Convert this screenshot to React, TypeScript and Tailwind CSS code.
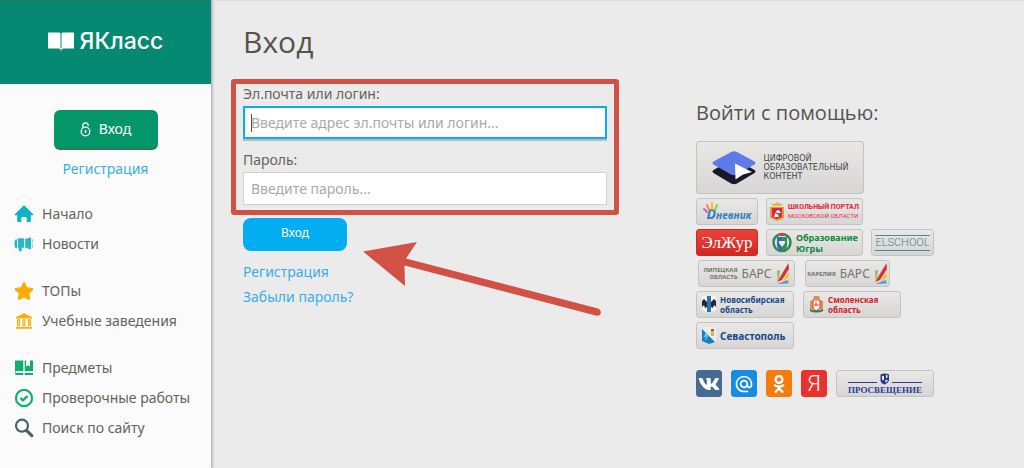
import { ReactNode } from "react";
import { FaOdnoklassniki, FaStar, FaVk } from "react-icons/fa";
import { MdAlternateEmail } from "react-icons/md";

const HomeIcon = () => (
  <svg width="20" height="20" viewBox="0 0 20 20" fill="#0db4c4">
    <path d="M9.3 1.8a1 1 0 0 1 1.4 0l8.3 8.1c.6.6.3 1.3-.5 1.3h-1.7v6.1c0 .5-.3.8-.8.8h-3.3v-4.3c0-.5-.3-.8-.8-.8H8.1c-.5 0-.8.3-.8.8v4.3H4c-.5 0-.8-.3-.8-.8v-6.1H1.5c-.8 0-1.1-.7-.5-1.3z" />
  </svg>
);

const NewsIcon = () => (
  <svg width="20" height="20" viewBox="0 0 20 20" fill="#2bb8c4">
    <path d="M1.8 5.2h1.3v9H1.8C0 13 0 6.500 1.800 5.200zM4 4.300h6.200v9.400H7.700v3.600H5.300l-1-3.600H4zM11.200 5l5.900-1.700v12.200l-5.900-1.800zM18 5c1 .5 1 2 .3 2.600v4c.7.600.7 1.700-.3 2.200z" />
  </svg>
);

const SchoolIcon = () => (
  <svg width="20" height="20" viewBox="0 0 20 20" fill="#fcae0c">
    <path d="M10 2.300 18 6v1.400H2V6zM3 8.300h3v7H3zM8.400 8.300h3v7h-3zM14 8.300h3v7h-3zM2 16h16v1.800H2z" />
    <path d="M4.200 9.200h.6v5h-.6zM9.600 9.200h.6v5h-.6zM15.200 9.200h.6v5h-.6z" fill="#fff3d6" />
  </svg>
);

const SubjectsIcon = () => (
  <svg width="20" height="20" viewBox="0 0 20 20" fill="#0fae6c">
    <path d="M2 2.500h6.500c.6 0 1 .4 1 1v9.700H3c-1 0-1.500.5-1.500 1 0 .4.200.7.600.7h7.400v2H2.700c-1 0-1.700-.7-1.700-1.700V3.500c0-.6.400-1 1-1zM10.500 2.500h1.600v6.200l1.900-1.500 1.900 1.500V2.500h2.100c.6 0 1 .4 1 1v9.700h-8.500zM10.500 14.900H19v2h-8.500z" />
    <path d="M1.500 13.800h17M10 2v15.500" stroke="#fbfbfb" strokeWidth=".8" />
  </svg>
);

const TestsIcon = () => (
  <svg width="20" height="20" viewBox="0 0 20 20" fill="none" stroke="#0fae73">
    <circle cx="10" cy="10" r="8.100" strokeWidth="2.200" />
    <path d="m6.500 10 2.400 2.400 4.600-4.300" strokeWidth="2.400" />
  </svg>
);

const SearchIcon = () => (
  <svg width="20" height="20" viewBox="0 0 20 20" fill="none" stroke="#475f70">
    <circle cx="8" cy="7.700" r="6" strokeWidth="2.200" />
    <path d="m12.400 12.400 5.400 5.200" strokeWidth="3.200" strokeLinecap="round" />
  </svg>
);

const LockIcon = () => (
  <svg width="11" height="15" viewBox="0 0 11 15" fill="none" stroke="#fff">
    <circle cx="5.500" cy="9.500" r="4.300" strokeWidth="1.300" />
    <path d="M2.800 6V3.400C2.800 0 8.200 0 8.200 3.400V4" strokeWidth="1.200" />
    <path d="M5.500 8v3" strokeWidth="1.500" />
  </svg>
);

const menu: { label: string; icon: ReactNode }[][] = [
  [
    { label: "Начало", icon: <HomeIcon /> },
    { label: "Новости", icon: <NewsIcon /> },
  ],
  [
    { label: "ТОПы", icon: <FaStar className="size-5 text-[#fcab08]" /> },
    { label: "Учебные заведения", icon: <SchoolIcon /> },
  ],
  [
    { label: "Предметы", icon: <SubjectsIcon /> },
    { label: "Проверочные работы", icon: <TestsIcon /> },
    { label: "Поиск по сайту", icon: <SearchIcon /> },
  ],
];

const Sidebar = () => (
  <aside className="z-10 w-[211px] shrink-0 bg-[#fbfbfb] shadow-[1px_0_3px_rgba(0,0,0,0.35)]">
    <a
      href="#"
      className="flex h-[84px] items-center justify-center gap-1.5 border-t border-[#2e7567] bg-[#068972] pb-1 font-['Inter'] text-[23px] font-medium text-white"
    >
      <svg width="26" height="20" viewBox="0 0 26 20" fill="#fff">
        <path d="M0 1.500h10.500c1 0 1.800.5 2 1.300v15.600c-.5-.7-1.300-1-2.300-1H0zM26 1.500H15.500c-1 0-1.800.5-2 1.300v15.600c.5-.7 1.300-1 2.300-1H26z" />
        <path d="M12.500 17h1v2.500h-1z" />
      </svg>
      ЯКласс
    </a>
    <div className="flex flex-col items-center pt-[26px]">
      <button
        type="button"
        className="flex h-10 w-[104px] items-center justify-center gap-2 rounded-md border-b-2 border-[#2c7d55] bg-[#049568] text-sm text-white"
      >
        <LockIcon />
        Вход
      </button>
      <a href="#" className="mt-[9px] text-[#38adea]">
        Регистрация
      </a>
    </div>
    <nav className="mt-5 flex flex-col gap-[17px] pl-3.5">
      {menu.map((group, i) => (
        <ul key={i}>
          {group.map((item) => (
            <li key={item.label}>
              <a href="#" className="flex h-[30px] items-center gap-2">
                {item.icon}
                {item.label}
              </a>
            </li>
          ))}
        </ul>
      ))}
    </nav>
  </aside>
);

const LoginForm = () => (
  <section className="relative min-w-0 flex-1 pt-[22px]">
    <h1 className="font-['Open_Sans'] text-3xl leading-10 text-[#55534c]">Вход</h1>
    <form className="mt-[22px]">
      <div className="relative">
        <label htmlFor="login" className="block">
          Эл.почта или логин:
        </label>
        <div className="relative mt-0.5">
          <input
            id="login"
            type="text"
            placeholder="Введите адрес эл.почты или логин..."
            className="block h-[33px] w-full border-2 border-[#08aeee] bg-white px-1.5 shadow-[0_2px_0_#bcbcbc] outline-none placeholder:text-[#a9a9a9]"
          />
          <span className="absolute top-2 left-2 h-[18px] w-px bg-[#55534c]" />
        </div>
        <label htmlFor="password" className="mt-[11px] block">
          Пароль:
        </label>
        <input
          id="password"
          type="password"
          placeholder="Введите пароль..."
          className="mt-0.5 block h-[33px] w-full border border-[#d2d2d2] bg-white px-[7px] outline-none placeholder:text-[#a9a9a9]"
        />
        <div className="pointer-events-none absolute -inset-x-3 -top-[5px] -bottom-[10px] rounded-[3px] border-[5px] border-[#d15145]" />
      </div>
      <button
        type="submit"
        className="mt-[13px] block h-[33px] w-[104px] rounded-lg bg-[#02adf2] pb-1 text-xs text-white"
      >
        Вход
      </button>
    </form>
    <div className="mt-[11px] flex flex-col items-start gap-[5px] text-[#38adea]">
      <a href="#">Регистрация</a>
      <a href="#">Забыли пароль?</a>
    </div>
    <svg
      className="pointer-events-none absolute top-[240px] left-[120px]"
      width="240"
      height="78"
      viewBox="0 0 240 78"
      fill="#d15145"
    >
      <path d="M0 11.500 54 2 43 18.500 235 68.500C240 71 238 77 232.500 75.500L41.500 25.500 42 46z" />
    </svg>
  </section>
);

type BadgeProps = { label: string; className: string; children: ReactNode };

const Badge = ({ label, className, children }: BadgeProps) => (
  <button
    type="button"
    aria-label={label}
    className={`flex items-center overflow-hidden rounded-[3px] border whitespace-nowrap ${className}`}
  >
    {children}
  </button>
);

const grey = "border-[#c3c3c3] bg-linear-to-b from-[#e9e8e7] to-[#d7d6d5]";

const BarsMark = () => (
  <svg width="14" height="22" viewBox="0 0 14 22" className="shrink-0">
    <path d="M12.500 0 13 6 6 17 1 19z" fill="#d83438" />
    <path d="M1 8 4 7 2 19z" fill="#8dbb38" />
    <path d="m12.500 9 .500 5-7 6z" fill="#f6c51c" />
    <path d="m12 17 .500 3.500L1 21z" fill="#4b9ed5" />
  </svg>
);

const Services = () => (
  <section className="w-[328px] shrink-0 pt-[99px]">
    <h2 className="font-['Open_Sans'] text-xl leading-7 text-[#55534c]">Войти с помощью:</h2>
    <div className="mt-3.5 flex flex-col gap-1">
      <Badge
        label="Цифровой образовательный контент"
        className={`h-[53px] w-[168px] justify-center gap-2 ${grey}`}
      >
        <svg width="44" height="36" viewBox="0 0 44 36">
          <path d="M1.500 20 19 10q3-1.500 6 0l17.500 10q2 1.500 0 3L25 33.500q-3 1.500-6 0L1.500 23q-2-1.500 0-3z" fill="#171a26" />
          <path d="M1.500 11.500 19 2q3-1.500 6 0l17.500 9.500q2 1.500 0 3L25 24.500q-3 1.500-6 0L1.500 14.500q-2-1.500 0-3z" fill="#5f7bea" />
          <path d="M23 13.500 40 22 31 24.500l-7.500 5z" fill="#fff" />
        </svg>
        <span className="text-left font-['DejaVu_Sans'] text-[8px] leading-[9px] text-[#44464c]">
          ЦИФРОВОЙ
          <br />
          ОБРАЗОВАТЕЛЬНЫЙ
          <br />
          КОНТЕНТ
        </span>
      </Badge>
      <div className="flex gap-2">
        <Badge label="Дневник" className={`h-[27px] w-[62px] justify-center ${grey}`}>
          <span className="relative flex h-full items-end pl-1 font-['Open_Sans']">
            <svg className="absolute top-[3px] left-0" width="16" height="12" viewBox="0 0 16 12" strokeWidth="2" strokeLinecap="round">
              <path d="m4 10-3-3" stroke="#b56ac0" />
              <path d="M6 8 4 3" stroke="#f18b32" />
              <path d="M9 7V1" stroke="#fabd24" />
              <path d="m12 8 2-5" stroke="#8ccb4a" />
            </svg>
            <span className="text-sm leading-5 font-bold text-[#2e7fc2] italic">D</span>
            <span className="text-[10px] leading-[18px] font-bold text-[#2e7fc2] italic">невник</span>
          </span>
        </Badge>
        <Badge label="Школьный портал Московской области" className={`h-[27px] w-[97px] gap-1 pl-[3px] ${grey}`}>
          <svg width="14" height="19" viewBox="0 0 14 19" className="shrink-0">
            <path d="M3 4 1 1l3 1 3-2 3 2 3-1-2 3z" fill="#e8b64b" />
            <path d="M0 5h14v11l-7 3-7-3z" fill="#d8a043" />
            <path d="M2 6h10v9l-5 2-5-2z" fill="#dd2834" />
            <path d="m4 15 2-6 3-1 2 3-3 1 1 3z" fill="#f2efe9" />
            <path d="m5 9 2 3 3-1" stroke="#3158a1" fill="none" />
          </svg>
          <span className="text-left font-['Roboto'] text-[#e52d47]">
            <b className="block text-[7px] leading-[9px] font-extrabold">ШКОЛЬНЫЙ ПОРТАЛ</b>
            <span className="block text-[6px] leading-2">МОСКОВСКОЙ ОБЛАСТИ</span>
          </span>
        </Badge>
      </div>
      <div className="flex gap-2">
        <Badge
          label="ЭлЖур"
          className="h-[27px] w-[62px] justify-center border-[#c82c25] bg-linear-to-b from-[#e94337] to-[#d52524] font-['Liberation_Serif'] text-[17px] text-white"
        >
          ЭлЖур
        </Badge>
        <Badge label="Образование Югры" className={`h-[27px] w-[97px] gap-1 pl-[5px] ${grey}`}>
          <svg width="20" height="21" viewBox="0 0 20 21" className="shrink-0">
            <circle cx="10" cy="10.500" r="8.500" fill="#d9e2de" stroke="#348653" strokeWidth="2.500" />
            <path d="M5 5h10v8q0 4-5 6-5-2-5-6z" fill="#356ca8" />
            <path d="M10 5h5v8q0 4-5 6z" fill="#28965c" />
            <path d="M7 9h6v2l-3 4-3-4z" fill="#f1eee8" />
            <path d="M7 1h6l-1 3H8z" fill="#c6414b" />
          </svg>
          <span className="text-left text-[9px] leading-[11px] font-bold text-[#098b3d]">
            Образование
            <br />
            Югры
          </span>
        </Badge>
        <Badge label="ELSCHOOL" className={`h-[27px] w-[63px] justify-center ${grey}`}>
          <span className="border-y border-[#488e94] font-['Roboto'] text-[11px] leading-[14px] font-light text-[#38848b]">
            ELSCHOOL
          </span>
        </Badge>
      </div>
      <div className="flex gap-2.5 pl-0.5">
        <Badge label="Липецкая область БАРС" className={`h-[27px] w-[97px] justify-center gap-1 text-[#77716e] ${grey}`}>
          <span className="text-right text-[6px] leading-[7px] font-bold">
            ЛИПЕЦКАЯ
            <br />
            ОБЛАСТЬ
          </span>
          <span className="text-xs">БАРС</span>
          <BarsMark />
        </Badge>
        <Badge label="Карелия БАРС" className={`h-[27px] w-[85px] justify-center gap-1 text-[#77716e] ${grey}`}>
          <b className="text-[6px]">КАРЕЛИЯ</b>
          <span className="text-xs">БАРС</span>
          <BarsMark />
        </Badge>
      </div>
      <div className="flex gap-[9px]">
        <Badge
          label="Новосибирская область"
          className={`h-[27px] w-[98px] gap-1 pl-[5px] ${grey}`}
        >
          <svg width="14" height="17" viewBox="0 0 14 17" className="shrink-0">
            <path d="M0 0h14v14l-7 3-7-3z" fill="#f3f3f3" />
            <path d="M5 0h4v16H5z" fill="#2873b8" />
            <path d="M0 5 2 3l3 3v5l-2 1-1-3-2 2zM14 5l-2-2-3 3v5l2 1 1-3 2 2z" fill="#24282d" />
          </svg>
          <span className="text-left text-[8px] leading-[10px] font-bold text-[#1b4988]">
            Новосибирская
            <br />
            область
          </span>
        </Badge>
        <Badge
          label="Смоленская область"
          className={`h-[27px] w-[98px] gap-1 pl-[5px] ${grey}`}
        >
          <svg width="15" height="17" viewBox="0 0 15 17" className="shrink-0">
            <path d="M5 0h5l1 3H4zM1 5l3-1v9H1zM14 5l-3-1v9h3z" fill="#dd9142" />
            <path d="M4 4h7v8l-4 3-3-3z" fill="#f5f3ef" stroke="#d4453c" />
            <path d="M5 9h5M7 6v4" stroke="#d4453c" />
            <path d="M1 14q6 3 13 0" stroke="#447451" strokeWidth="2" fill="none" />
          </svg>
          <span className="text-left text-[8px] leading-[10px] font-bold text-[#d5202c]">
            Смоленская
            <br />
            область
          </span>
        </Badge>
      </div>
      <Badge
        label="Севастополь"
        className={`h-[27px] w-[98px] gap-1 pl-[5px] text-[10px] font-bold text-[#1b4988] ${grey}`}
      >
        <svg width="14" height="17" viewBox="0 0 14 17" className="shrink-0">
          <path d="M0 0h14v14l-7 3-7-3z" fill="#f0eee8" />
          <path d="m0 2 13 13-6 2-7-3z" fill="#1480c4" />
          <path d="M4 5v8M2 10l2-3 2 3" stroke="#9bd3ef" fill="none" />
          <path d="M9 4h3v5H9z" fill="#dfb044" />
          <path d="M9 2h3v2H9z" fill="#cf3f38" />
        </svg>
        Севастополь
      </Badge>
    </div>
    <div className="mt-[21px] flex gap-[9px]">
      <Badge label="ВКонтакте" className="h-[27px] w-[26px] justify-center border-[#466b91] bg-[#466b91] text-white">
        <FaVk className="size-[22px] shrink-0" />
      </Badge>
      <Badge label="Mail.ru" className="h-[27px] w-[26px] justify-center border-[#168de2] bg-[#168de2] text-white">
        <MdAlternateEmail className="size-5 shrink-0" />
      </Badge>
      <Badge label="Одноклассники" className="h-[27px] w-[26px] justify-center border-[#f47b0d] bg-[#f47b0d] text-white">
        <FaOdnoklassniki className="size-[18px] shrink-0" />
      </Badge>
      <Badge label="Яндекс" className="h-[27px] w-[26px] justify-center border-[#e9312d] bg-[#e9312d] font-['Roboto'] text-[22px] leading-6 font-light text-white">
        Я
      </Badge>
      <Badge label="Просвещение" className={`h-[27px] w-[98px] flex-col justify-center ${grey}`}>
        <svg width="86" height="12" viewBox="0 0 86 12">
          <path d="M6 9.500h29M50 9.500h30" stroke="#2a3c90" />
          <path d="M38.500 1.500q4-2 8.500 0v6q-1 3-4.500 4-3.500-1-4-4z" fill="#2a3c90" />
          <path d="M40 3h2v4h-2zM44 2h1.500v3H44zM43 7h3l-2 3z" fill="#e2e3ec" />
        </svg>
        <span className="font-['Liberation_Serif'] text-[9px] leading-[10px] font-bold text-[#2a3c90]">
          ПРОСВЕЩЕНИЕ
        </span>
      </Badge>
    </div>
  </section>
);

export default function App() {
  return (
    <div className="flex min-h-screen bg-[#ebebeb] font-['Noto_Sans','Open_Sans',sans-serif] text-sm leading-5 text-[#65645a]">
      <Sidebar />
      <main className="flex min-w-0 flex-1 gap-[89px] pl-8 shadow-[inset_0_1px_0_#dcdcdc]">
        <LoginForm />
        <Services />
      </main>
    </div>
  );
}
